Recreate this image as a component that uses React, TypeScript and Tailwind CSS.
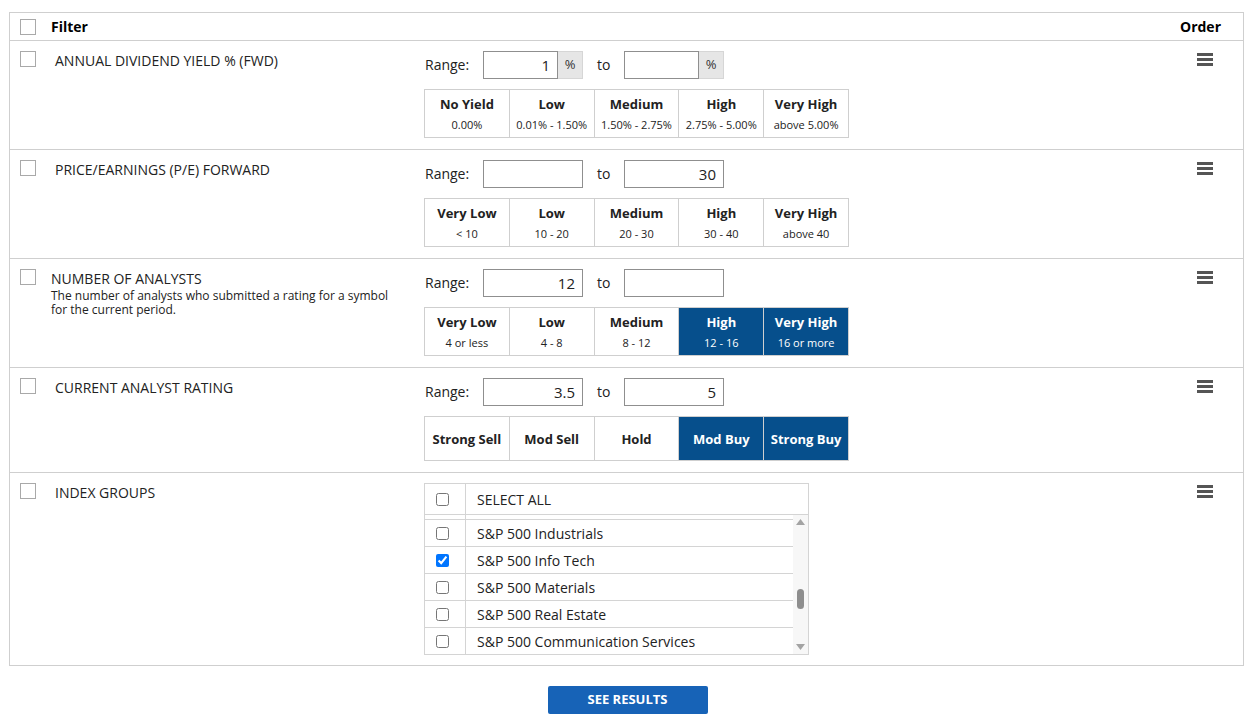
import React from "react";

const font = { fontFamily: '"Open Sans", "Noto Sans", Arial, sans-serif' };

function Box() {
  return <div className="w-[16px] h-[16px] border border-[#a9a9a9] bg-white shrink-0" />;
}

function Hamburger() {
  return (
    <div className="flex flex-col gap-[2.5px] w-[16px]">
      <div className="h-[2.5px] bg-[#555]" />
      <div className="h-[2.5px] bg-[#555]" />
      <div className="h-[2.5px] bg-[#555]" />
    </div>
  );
}

function Input({ value, addon }: { value?: string; addon?: boolean }) {
  return (
    <div className="flex h-[28px] w-[100px]">
      <div className="flex-1 h-full border border-[#8f8f8f] bg-white flex items-center justify-end pr-[7px] pt-[1px] text-[15px] text-[#222]">
        {value}
      </div>
      {addon && (
        <div className="w-[25px] h-full bg-[#e6e6e6] border-y border-r border-[#d6d6d6] flex items-center justify-center text-[13px] text-[#333]">
          %
        </div>
      )}
    </div>
  );
}

function RangeRow({ a, b, addon }: { a?: string; b?: string; addon?: boolean }) {
  return (
    <div className="flex items-center h-[28px]">
      <span className="w-[59px] pl-[1px] pb-[2px] text-[14px] text-[#222]">Range:</span>
      <Input value={a} addon={addon} />
      <span className="w-[41px] pl-[14px] pb-[2px] text-[14px] text-[#222]">to</span>
      <Input value={b} addon={addon} />
    </div>
  );
}

type Cell = { t: string; s?: string; on?: boolean };

function Group({ cells, h }: { cells: Cell[]; h: string }) {
  return (
    <div className={`flex w-[425px] ${h} border border-[#cfcfcf]`}>
      {cells.map((c, i) => (
        <div
          key={i}
          className={`flex-1 flex flex-col items-center justify-center ${i > 0 ? "border-l border-[#cfcfcf]" : ""} ${
            c.on ? "bg-[#064f8c] text-white" : "bg-white text-[#222]"
          }`}
        >
          <div className="text-[13px] font-bold leading-[18px]">{c.t}</div>
          {c.s && <div className="text-[11px] leading-[15px] mt-[4px]">{c.s}</div>}
        </div>
      ))}
    </div>
  );
}

function Row({
  label,
  desc,
  indent = true,
  children,
}: {
  label: string;
  desc?: string;
  indent?: boolean;
  children: React.ReactNode;
}) {
  return (
    <div className="flex border-t border-[#cfcfcf] pt-[10px] pb-[11px]">
      <div className="w-[41px] pl-[10px]">
        <Box />
      </div>
      <div className="w-[373px]">
        <div className={`text-[14px] leading-[20px] text-[#222] ${indent ? "pl-[4px]" : ""}`}>{label}</div>
        {desc && <div className="text-[12px] leading-[14px] text-[#222] w-[350px]">{desc}</div>}
      </div>
      <div className="flex-1 flex flex-col gap-[10px]">{children}</div>
      <div className="w-[80px] flex justify-end pr-[30px] pt-[2px]">
        <Hamburger />
      </div>
    </div>
  );
}

function ListRow({ label, checked }: { label: string; checked?: boolean }) {
  return (
    <div className="flex h-[27px] border-t border-[#d4d4d4]">
      <div className="w-[41px] border-r border-[#d4d4d4] flex items-center pl-[11px]">
        <input type="checkbox" defaultChecked={checked} className="m-0 w-[13px] h-[13px]" />
      </div>
      <div className="flex-1 flex items-center pl-[11px] text-[14px] text-[#222]">{label}</div>
    </div>
  );
}

export default function App() {
  return (
    <div className="w-[1255px] h-[722px] bg-white overflow-hidden" style={font}>
      <div className="h-[12px]" />
      <div className="ml-[9px] w-[1235px] border border-[#cfcfcf]">
        <div className="flex items-center h-[27px]">
          <div className="w-[41px] pl-[10px]">
            <Box />
          </div>
          <div className="flex-1 text-[14px] font-bold text-black">Filter</div>
          <div className="w-[80px] text-right pr-[22px] text-[14px] font-bold text-black">Order</div>
        </div>

        <Row label="ANNUAL DIVIDEND YIELD % (FWD)">
          <RangeRow a="1" addon />
          <Group
            h="h-[49px]"
            cells={[
              { t: "No Yield", s: "0.00%" },
              { t: "Low", s: "0.01% - 1.50%" },
              { t: "Medium", s: "1.50% - 2.75%" },
              { t: "High", s: "2.75% - 5.00%" },
              { t: "Very High", s: "above 5.00%" },
            ]}
          />
        </Row>

        <Row label="PRICE/EARNINGS (P/E) FORWARD">
          <RangeRow b="30" />
          <Group
            h="h-[49px]"
            cells={[
              { t: "Very Low", s: "< 10" },
              { t: "Low", s: "10 - 20" },
              { t: "Medium", s: "20 - 30" },
              { t: "High", s: "30 - 40" },
              { t: "Very High", s: "above 40" },
            ]}
          />
        </Row>

        <Row
          label="NUMBER OF ANALYSTS"
          indent={false}
          desc="The number of analysts who submitted a rating for a symbol for the current period."
        >
          <RangeRow a="12" />
          <Group
            h="h-[49px]"
            cells={[
              { t: "Very Low", s: "4 or less" },
              { t: "Low", s: "4 - 8" },
              { t: "Medium", s: "8 - 12" },
              { t: "High", s: "12 - 16", on: true },
              { t: "Very High", s: "16 or more", on: true },
            ]}
          />
        </Row>

        <Row label="CURRENT ANALYST RATING">
          <RangeRow a="3.5" b="5" />
          <Group
            h="h-[45px]"
            cells={[
              { t: "Strong Sell" },
              { t: "Mod Sell" },
              { t: "Hold" },
              { t: "Mod Buy", on: true },
              { t: "Strong Buy", on: true },
            ]}
          />
        </Row>

        <div className="flex border-t border-[#cfcfcf] pt-[10px] pb-[10px]">
          <div className="w-[41px] pl-[10px]">
            <Box />
          </div>
          <div className="w-[373px] text-[14px] leading-[20px] text-[#222] pl-[4px]">INDEX GROUPS</div>
          <div className="flex-1">
            <div className="w-[385px] border border-[#d4d4d4]">
              <div className="flex h-[30px]">
                <div className="w-[41px] border-r border-[#d4d4d4] flex items-center pl-[11px]">
                  <input type="checkbox" className="m-0 w-[13px] h-[13px]" />
                </div>
                <div className="flex-1 flex items-center pl-[11px] text-[14px] text-[#222]">SELECT ALL</div>
              </div>
              <div className="flex border-t border-[#d4d4d4] h-[140px]">
                <div className="flex-1 flex flex-col">
                  <div className="h-[4px] flex">
                    <div className="w-[41px] border-r border-[#d4d4d4]" />
                  </div>
                  <ListRow label="S&P 500 Industrials" />
                  <ListRow label="S&P 500 Info Tech" checked />
                  <ListRow label="S&P 500 Materials" />
                  <ListRow label="S&P 500 Real Estate" />
                  <ListRow label="S&P 500 Communication Services" />
                </div>
                <div className="w-[15px] bg-[#f7f7f7] flex flex-col items-center justify-between py-[4px]">
                  <svg width="9" height="6" viewBox="0 0 9 6">
                    <path d="M0 6 L4.5 0 L9 6 Z" fill="#a3a3a3" />
                  </svg>
                  <div className="w-[7px] h-[20px] rounded-full bg-[#8e8e8e] mt-[64px]" />
                  <div className="flex-1" />
                  <svg width="9" height="6" viewBox="0 0 9 6">
                    <path d="M0 0 L9 0 L4.5 6 Z" fill="#a3a3a3" />
                  </svg>
                </div>
              </div>
            </div>
          </div>
          <div className="w-[80px] flex justify-end pr-[30px] pt-[2px]">
            <Hamburger />
          </div>
        </div>
      </div>
      <div className="flex justify-center pt-[20px]">
        <div className="w-[160px] h-[28px] bg-[#1763b7] rounded-[2px] flex items-center justify-center text-white text-[13px] font-bold">
          SEE RESULTS
        </div>
      </div>
    </div>
  );
}
